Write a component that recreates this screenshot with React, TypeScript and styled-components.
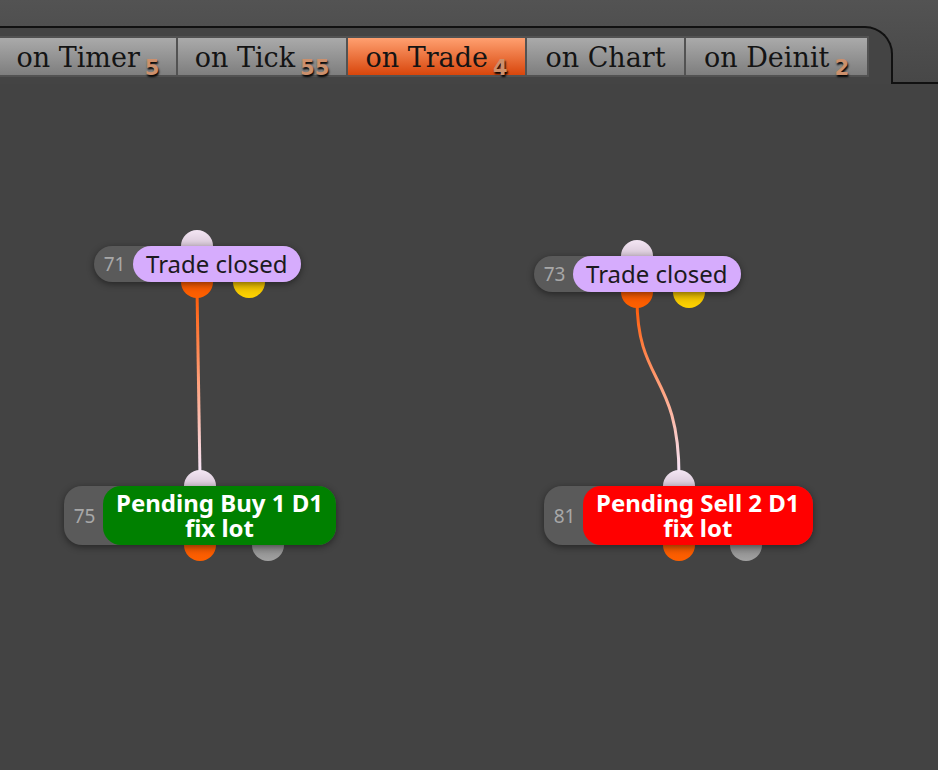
import React from 'react';
import styled, { createGlobalStyle } from 'styled-components';

const GlobalStyle = createGlobalStyle`
  html, body { margin: 0; padding: 0; background: #434343; }
  body { width: 938px; height: 770px; overflow: hidden; }
`;

interface TabInfo {
    label: string,
    count?: number,
    active?: boolean
}

interface PinInfo {
    x: number,
    kind: 'in' | 'out' | 'alt' | 'off'
}

interface NodeInfo {
    id: number,
    left: number,
    top: number,
    offset: number,
    color: string,
    dark?: boolean,
    lines: string[],
    pins: PinInfo[]
}

const tabs: TabInfo[] = [
    { label: 'on Timer', count: 5 },
    { label: 'on Tick', count: 55 },
    { label: 'on Trade', count: 4, active: true },
    { label: 'on Chart' },
    { label: 'on Deinit', count: 2 },
];

// canvas coords (canvas starts at y=84)
const nodes: NodeInfo[] = [
    { id: 71, left: 94, top: 162, offset: 39, color: '#d6acfd', dark: true, lines: ['Trade closed'], pins: [{ x: 103, kind: 'in' }, { x: 103, kind: 'out' }, { x: 155, kind: 'alt' }] },
    { id: 73, left: 534, top: 172, offset: 39, color: '#d6acfd', dark: true, lines: ['Trade closed'], pins: [{ x: 103, kind: 'in' }, { x: 103, kind: 'out' }, { x: 155, kind: 'alt' }] },
    { id: 75, left: 64, top: 402, offset: 39, color: '#008000', lines: ['Pending Buy 1 D1', 'fix lot'], pins: [{ x: 136, kind: 'in' }, { x: 136, kind: 'out' }, { x: 204, kind: 'off' }] },
    { id: 81, left: 544, top: 402, offset: 39, color: '#ff0000', lines: ['Pending Sell 2 D1', 'fix lot'], pins: [{ x: 135, kind: 'in' }, { x: 135, kind: 'out' }, { x: 202, kind: 'off' }] },
];

const tabWidths = [176, 168, 177, 157, 181];

const Page = styled.div`
    width: 938px;
    height: 770px;
    display: flex;
    flex-direction: column;
    background: #434343;
`;

const TopRow = styled.div`
    height: 84px;
    display: flex;
    align-items: flex-end;
    background: linear-gradient(to bottom, #535353, #474747);
`;

const TabFrame = styled.div`
    width: 891px;
    height: 48px;
    border-top: 2px solid #111;
    border-right: 2px solid #111;
    border-top-right-radius: 28px;
    background: #444;
    padding-top: 8px;
`;

const Filler = styled.div`
    flex: 1;
    height: 56px;
    border-bottom: 2px solid #111;
`;

const TabStrip = styled.div`
    display: inline-flex;
    gap: 2px;
    padding: 2px 2px 2px 0;
    background: #525252;
`;

const Tab = styled.div<{ $active?: boolean, $w: number }>`
    width: ${p => p.$w}px;
    height: 37px;
    display: flex;
    align-items: center;
    justify-content: center;
    font-family: 'DejaVu Serif', serif;
    font-size: 27px;
    color: #141414;
    padding-top: 2px;
    box-sizing: border-box;
    background: ${p => p.$active
        ? 'linear-gradient(to bottom, #ffa070, #d8460c)'
        : 'linear-gradient(to bottom, #aaaaaa, #7e7e7e)'};
    white-space: nowrap;
`;

const Badge = styled.span`
    font-family: 'DejaVu Sans', sans-serif;
    font-weight: bold;
    font-size: 21px;
    color: #cc906c;
    text-shadow: 1px 2px 2px #000;
    margin-left: 5px;
    position: relative;
    top: 10px;
`;

const Canvas = styled.div`
    position: relative;
    flex: 1;
`;

const Wires = styled.svg`
    position: absolute;
    left: 0;
    top: 0;
    width: 938px;
    height: 686px;
    z-index: 1;
`;

const Node = styled.div`
    position: absolute;
    z-index: 2;
`;

const Pin = styled.div<{ $kind: PinInfo['kind'] }>`
    position: absolute;
    width: 32px;
    height: 32px;
    border-radius: 50%;
    margin-left: -16px;
    z-index: 0;
    top: ${p => p.$kind === 'in' ? '-16px' : 'calc(100% - 16px)'};
    background: ${p => {
        switch (p.$kind) {
            case 'in': return 'linear-gradient(to bottom, #f4e6f4, #b9a6b9)';
            case 'out': return 'linear-gradient(to bottom, #e24f00, #ff6000)';
            case 'alt': return 'linear-gradient(to bottom, #c89a00, #ffd400)';
            default: return 'linear-gradient(to bottom, #6e6e6e, #a2a2a2)';
        }
    }};
`;

const Body = styled.div`
    position: relative;
    z-index: 1;
    display: flex;
    align-items: stretch;
    background: #5a5a5a;
    border-radius: 18px;
    box-shadow: 0 2px 7px rgba(0, 0, 0, 0.45);
`;

const Num = styled.div<{ $w: number }>`
    width: ${p => p.$w}px;
    flex-shrink: 0;
    display: flex;
    align-items: center;
    justify-content: center;
    font-family: 'Noto Sans', sans-serif;
    font-size: 19px;
    color: #a8a8a8;
    padding-left: 2px;
    box-sizing: border-box;
`;

const Label = styled.div<{ $bg: string, $dark?: boolean }>`
    background: ${p => p.$bg};
    border-radius: 18px;
    padding: ${p => p.$dark ? '2px 13px 3px' : '4px 13px 5px'};
    font-family: 'Noto Sans', sans-serif;
    font-size: 24px;
    font-weight: ${p => p.$dark ? 'normal' : 'bold'};
    color: ${p => p.$dark ? '#1c1a20' : '#fff'};
    line-height: ${p => p.$dark ? '31px' : '25px'};
    text-align: center;
    white-space: nowrap;
`;

const Line = styled.div`
    display: block;
`;

const App: React.FC = () => {
    return (
        <Page>
            <GlobalStyle />
            <TopRow>
                <TabFrame>
                    <TabStrip>
                        {tabs.map((t, i) => (
                            <Tab key={t.label} $active={t.active} $w={tabWidths[i]}>
                                {t.label}
                                {t.count !== undefined ? <Badge>{t.count}</Badge> : null}
                            </Tab>
                        ))}
                    </TabStrip>
                </TabFrame>
                <Filler />
            </TopRow>
            <Canvas>
                <Wires viewBox="0 0 938 686">
                    <defs>
                        <linearGradient id="w1" gradientUnits="userSpaceOnUse" x1="0" y1="213" x2="0" y2="386">
                            <stop offset="0" stopColor="#ff5d0a" />
                            <stop offset="0.5" stopColor="#ffa27e" />
                            <stop offset="1" stopColor="#f6e4f6" />
                        </linearGradient>
                        <linearGradient id="w2" gradientUnits="userSpaceOnUse" x1="0" y1="223" x2="0" y2="386">
                            <stop offset="0" stopColor="#ff5d0a" />
                            <stop offset="0.5" stopColor="#ffa27e" />
                            <stop offset="1" stopColor="#f6e4f6" />
                        </linearGradient>
                    </defs>
                    <path d="M197 205 L200 392" stroke="url(#w1)" strokeWidth="3" fill="none" />
                    <path d="M637 215 C 637 300, 679 290, 679 392" stroke="url(#w2)" strokeWidth="3" fill="none" />
                </Wires>
                {nodes.map(n => (
                    <Node key={n.id} style={{ left: n.left, top: n.top }}>
                        {n.pins.map((p, i) => (
                            <Pin key={i} $kind={p.kind} style={{ left: p.x }} />
                        ))}
                        <Body>
                            <Num $w={n.offset}>{n.id}</Num>
                            <Label $bg={n.color} $dark={n.dark}>
                                {n.lines.map(l => <Line key={l}>{l}</Line>)}
                            </Label>
                        </Body>
                    </Node>
                ))}
            </Canvas>
        </Page>
    );
};

export default App;
